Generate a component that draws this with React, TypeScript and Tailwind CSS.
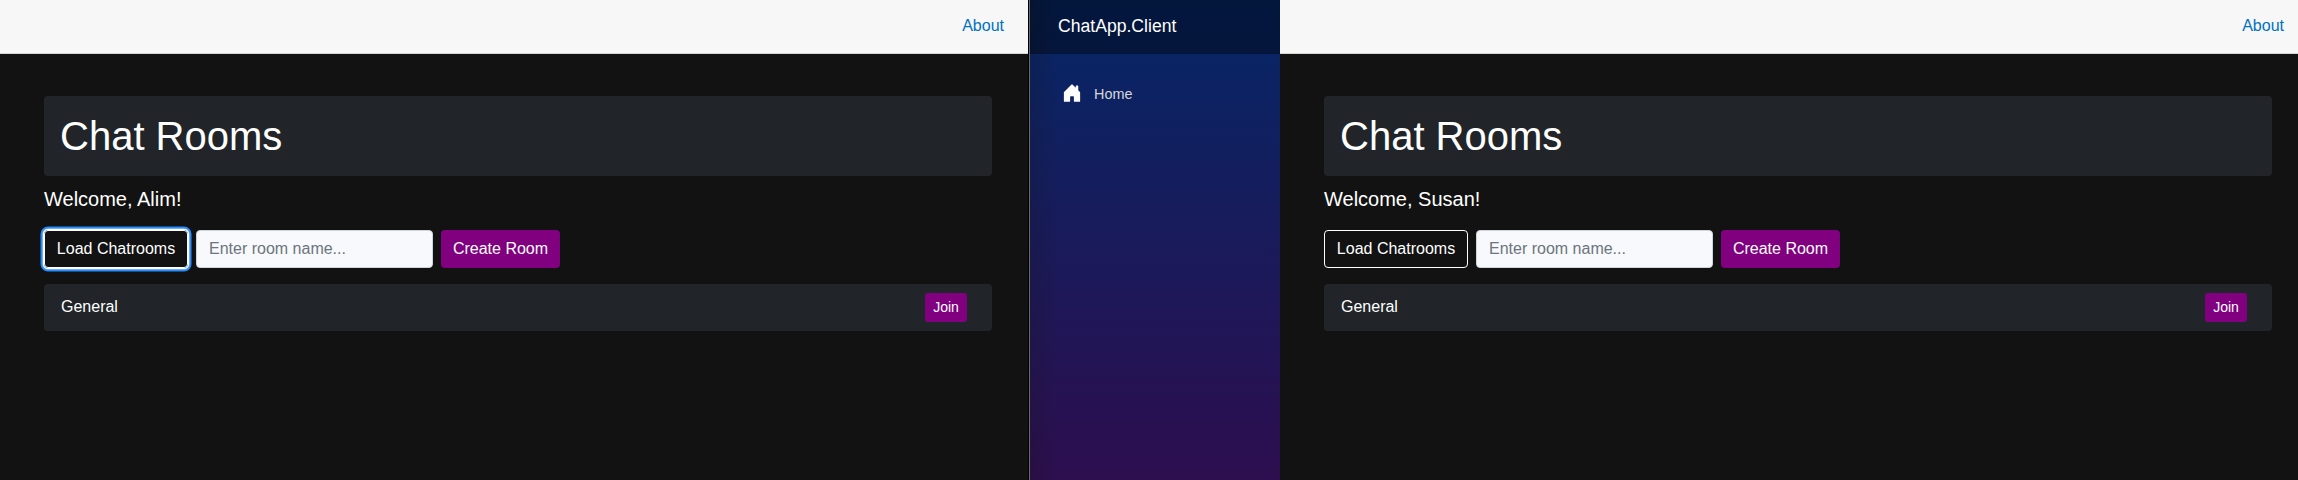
function HomeIcon() {
  return (
    <svg viewBox="0 0 16 16" className="mb-0.5 size-5 shrink-0 fill-white" aria-hidden="true">
      <path d="M6.5 14.5v-3.505c0-.245.25-.495.5-.495h2c.25 0 .5.25.5.5v3.5a.5.5 0 0 0 .5.5h4a.5.5 0 0 0 .5-.5v-7a.5.5 0 0 0-.146-.354L13 5.793V2.5a.5.5 0 0 0-.5-.5h-1a.5.5 0 0 0-.5.5v1.293L8.354 1.146a.5.5 0 0 0-.708 0l-6 6A.5.5 0 0 0 1.5 7.5v7a.5.5 0 0 0 .5.5h4a.5.5 0 0 0 .5-.5Z" />
    </svg>
  );
}

function Sidebar() {
  return (
    <aside className="flex w-[250px] shrink-0 flex-col bg-[linear-gradient(90deg,rgba(20,20,20,0.2)_0,rgba(20,20,20,0)_28px),linear-gradient(180deg,rgb(5,39,103)_0,#3a0647_636px)]">
      <div className="flex h-[54px] items-center bg-black/40 px-7 pb-0.5">
        <a href="#" className="text-[17.6px] leading-[26px] text-white">
          ChatApp.Client
        </a>
      </div>
      <nav className="pt-4">
        <a href="#" className="flex h-12 items-center gap-3 px-8 text-[14.4px] leading-6 text-[#d7d7d7]">
          <HomeIcon />
          <span>Home</span>
        </a>
      </nav>
    </aside>
  );
}

function ChatPage({ user, focused = false }: { user: string; focused?: boolean }) {
  return (
    <main className="flex w-[1028px] shrink-0 flex-col bg-[#121212] text-white">
      <header className="flex h-[54px] items-center justify-end border-b border-[#d6d5d5] bg-[#f7f7f7] pr-6 pb-[1px]">
        <a href="#" className="text-base text-[#0071c1]">
          About
        </a>
      </header>
      <article className="flex flex-col pt-[42px] pr-9 pl-11">
        <h1 className="rounded bg-[#212529] p-4 text-[40px] leading-[48px]">Chat Rooms</h1>
        <h5 className="mt-[11px] text-xl leading-6">Welcome, {user}!</h5>
        <div className="mt-[19px] flex h-[38px] gap-2">
          <button
            className={
              focused
                ? "w-36 rounded border border-white text-base whitespace-nowrap shadow-[0_0_0_1px_#ffffff,0_0_0_1.5px_#b5d5fb,0_0_0_3.5px_#258cfb]"
                : "w-36 rounded border border-white text-base whitespace-nowrap"
            }
          >
            Load Chatrooms
          </button>
          <input
            placeholder="Enter room name..."
            className="w-[237px] rounded border border-[#ced4da] bg-[#f8f9fc] px-3 text-base text-[#212529] placeholder:text-[#6c757d]"
          />
          <button className="w-[119px] rounded bg-[#800080] text-base whitespace-nowrap">Create Room</button>
        </div>
        <ul className="mt-4">
          <li className="flex h-[47px] items-center justify-between rounded bg-[#212529] pr-[25px] pl-[17px]">
            <span className="pb-0.5 text-base">General</span>
            <button className="w-[42px] rounded-[3px] bg-[#800080] pt-1 pb-[5px] text-sm leading-5">Join</button>
          </li>
        </ul>
      </article>
    </main>
  );
}

export default function App() {
  return (
    <div className="flex h-[480px] w-[2298px] overflow-hidden bg-[#121212] font-['Liberation_Sans',Arial,sans-serif]">
      <ChatPage user="Alim" focused />
      <div className="w-0.5 shrink-0 border-r border-[#6b6b6b] bg-black" />
      <Sidebar />
      <ChatPage user="Susan" />
    </div>
  );
}
